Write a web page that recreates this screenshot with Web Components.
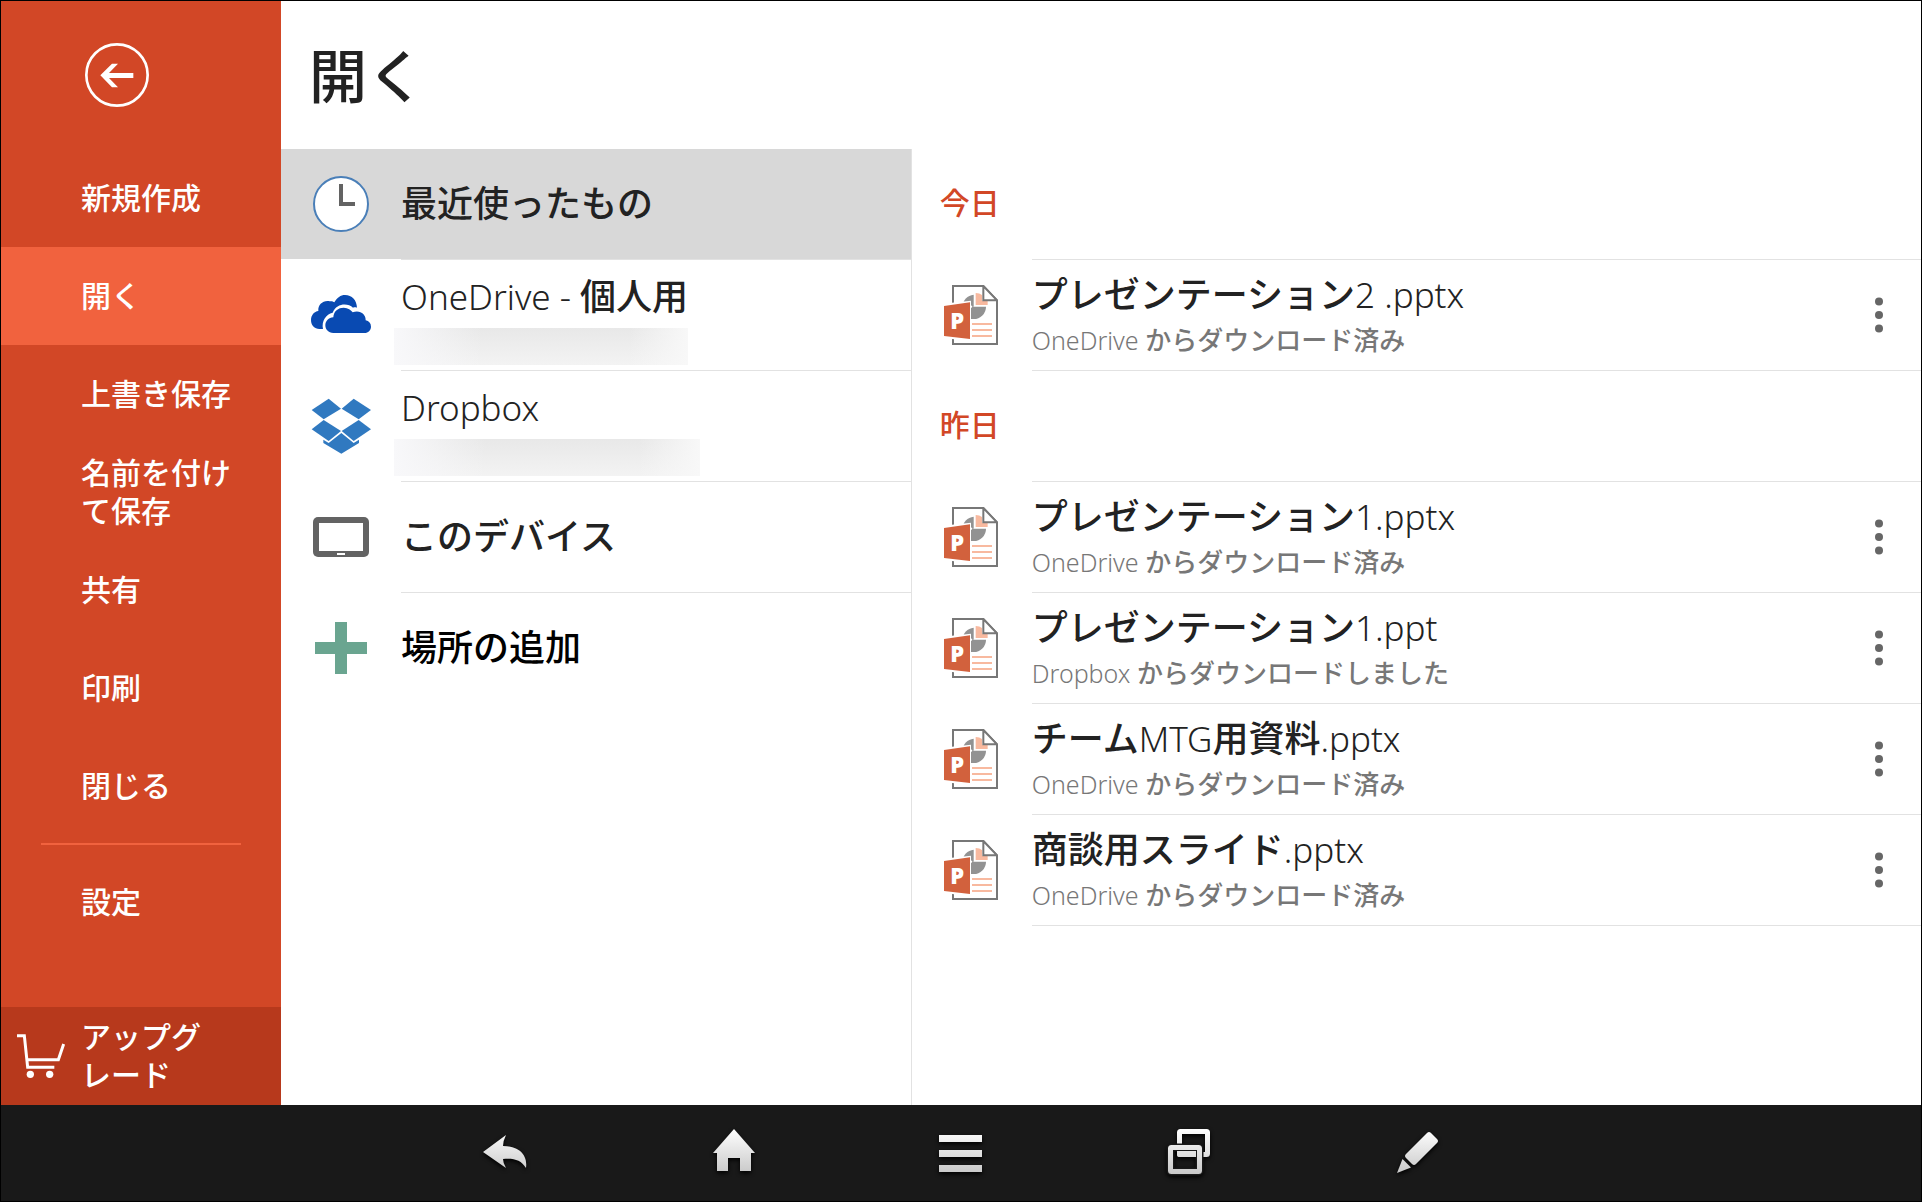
<!DOCTYPE html>
<html lang="ja">
<head>
<meta charset="UTF-8">
<meta name="viewport" content="width=device-width, initial-scale=1.0">
<title>開く</title>
<style>
    * { box-sizing: border-box; }

    body {
        margin: 0;
        font-family: "Noto Sans CJK JP", sans-serif;
        font-weight: 500;
        color: #222;
        --brand: #d24726;
        --brand-light: #f1623e;
        --brand-dark: #b7391c;
        --line: #e2e2e2;
        --latin: "Noto Sans", "Open Sans", sans-serif;
    }
</style>
</head>
<body>
<backstage-app>
    <side-menu slot="menu">
        <side-item>新規作成</side-item>
        <side-item active>開く</side-item>
        <side-item>上書き保存</side-item>
        <side-item>名前を付けて保存</side-item>
        <side-item>共有</side-item>
        <side-item>印刷</side-item>
        <side-item>閉じる</side-item>
        <side-rule></side-rule>
        <side-item>設定</side-item>
        <side-item slot="footer" cart>アップグレード</side-item>
    </side-menu>

    <span slot="title">開く</span>

    <place-row slot="places" icon="clock" label="最近使ったもの" selected></place-row>
    <place-row slot="places" icon="onedrive" label="OneDrive - 個人用" account="294"></place-row>
    <place-row slot="places" icon="dropbox" label="Dropbox" account="306"></place-row>
    <place-row slot="places" icon="tablet" label="このデバイス"></place-row>
    <place-row slot="places" icon="plus" label="場所の追加" last></place-row>

    <file-group slot="files" label="今日">
        <file-row name="プレゼンテーション2 .pptx" status="OneDrive からダウンロード済み"></file-row>
    </file-group>
    <file-group slot="files" label="昨日">
        <file-row name="プレゼンテーション1.pptx" status="OneDrive からダウンロード済み"></file-row>
        <file-row name="プレゼンテーション1.ppt" status="Dropbox からダウンロードしました"></file-row>
        <file-row name="チームMTG用資料.pptx" status="OneDrive からダウンロード済み"></file-row>
        <file-row name="商談用スライド.pptx" status="OneDrive からダウンロード済み"></file-row>
    </file-group>

    <system-bar slot="system"></system-bar>
</backstage-app>

<script>
const RESET = `
    * { box-sizing: border-box; }
    svg { display: block; flex: none; }
    button {
        margin: 0;
        padding: 0;
        border: 0;
        background: none;
        font: inherit;
        color: inherit;
        text-align: left;
        cursor: pointer;
    }
`;

const PLACE_ICONS = {
    clock: `<svg width="60" height="60" viewBox="0 0 60 60">
        <circle cx="30" cy="30" r="27" fill="#fff" stroke="#4a7fb8" stroke-width="2"/>
        <path d="M28 10h4v18h12v4H28z" fill="#636363"/>
    </svg>`,
    onedrive: `<svg width="60" height="60" viewBox="93 435 180 180" fill="#094ab2">
        <path d="M129 567H118C104 567 93 556 93 540C93 525 103 515 115 513C113 494 130 480 149 484C155 483 160 485 163 487C171 473 182 465 195 465C216 465 230 480 231 503C226 501 222 502 219 503C203 488 169 490 158 518C138 522 124 543 129 567Z"/>
        <path d="M160 579C145 579 136 568 136 556C136 543 146 533 160 532C161 513 175 503 191 503C204 503 213 510 218 517C240 509 258 523 257 541C267 543 273 550 273 560C273 571 264 579 254 579Z"/>
    </svg>`,
    dropbox: `<svg width="60" height="60" viewBox="93 78 180 180" fill="#3079c0">
        <path d="M146 86L183 116L131 148L95 120Z"/>
        <path d="M221 86L273 120L236 148L185 116Z"/>
        <path d="M131 150L183 183L146 213L95 178Z"/>
        <path d="M236 150L273 178L221 213L185 183Z"/>
        <path d="M184 189L221 219L237 209V219L184 251L130 219V209L146 219Z"/>
    </svg>`,
    tablet: `<svg width="60" height="60" viewBox="93 411 180 180">
        <rect x="99" y="441" width="168" height="120" rx="15" fill="#636363"/>
        <path d="M117 459H249V543H117ZM171 549H195V555H171Z" fill="#fff"/>
    </svg>`,
    plus: `<svg width="60" height="60" viewBox="0 0 60 60">
        <path d="M24 4h12v20h20v12H36v20H24V36H4V24h20z" fill="#6aa590"/>
    </svg>`
};

const FILE_ICON = `<svg width="54" height="60" viewBox="42 45 162 180">
    <path d="M69 48H160L201 91V222H69Z" fill="#fff" stroke="#777" stroke-width="6"/>
    <path d="M131 110V74A36 36 0 0 0 98 110Z" fill="#929292"/>
    <path d="M131 110H168A37 37 0 0 1 94 110Z" fill="#929292"/>
    <path d="M98 107H126V113H98Z" fill="#fff"/>
    <path d="M137 69Q149 69 156 75V92H173V105H137Z" fill="#f8b99f"/>
    <path d="M160 48V91H201Z" fill="#fff" stroke="#777" stroke-width="6"/>
    <path d="M126 159H186V165H126ZM126 177H186V183H126ZM126 195H186V201H126Z" fill="#f8b99f"/>
    <path d="M66 98L123 92V213L66 207Z" fill="#fff"/>
    <path d="M42 108L120 97V207L42 198Z" fill="#d2613d"/>
    <text x="61" y="177" font-family="Open Sans" font-weight="800" font-size="66" fill="#fff">P</text>
</svg>`;

const CART_ICON = `<svg width="48" height="48" viewBox="51 756 144 144">
    <path d="M51 767H73L83 862H163M80 839H175L191 792" fill="none" stroke="#fff" stroke-width="9"/>
    <circle cx="91" cy="883" r="11" fill="#fff"/>
    <circle cx="149" cy="883" r="11" fill="#fff"/>
</svg>`;

const SYSTEM_ICONS = [
    ['戻る', '<path d="M2 23L25 6Q22 12 22 17C37 17 47 25 45 39C40 31 33 29 22 30Q22 34 25 39Z"/>'],
    ['ホーム', '<path d="M25 0L46 24H42V42H31V29H19V42H8V24H4Z"/>'],
    ['メニュー', '<path d="M2 6H45V13H2ZM2 21H45V28H2ZM2 36H45V43H2Z"/>'],
    ['履歴', `<g fill="none" stroke="url(#shine)" stroke-width="5">
        <rect x="14.5" y="2.5" width="28" height="23" rx="1"/>
        <rect x="5.5" y="18.5" width="29" height="24" rx="1" stroke="#191919" stroke-width="8"/>
        <rect x="5.5" y="18.5" width="29" height="24" rx="1"/>
    </g>
    <path d="M12 22H31V28H14Q12 28 12 26Z"/>`],
    ['ペン', '<path d="M34 4Q36 2 38 4L44 10Q46 12 44 14L23 35Q21 37 19 35L13 29Q11 27 13 25Z"/><path d="M9.500 30L18 38.500L4 44Z"/>']
];

// Wraps runs of Latin letters and digits, which are set lighter than the kana
function mixed(text) {
    return text.replace(/[A-Za-z0-9.][A-Za-z0-9. -]*/g, run => `<span class="latin">${run}</span>`);
}

class BackstageApp extends HTMLElement {
    constructor() {
        super();
        this.attachShadow({ mode: 'open' });
    }

    connectedCallback() {
        this.shadowRoot.innerHTML = `
            <style>
                ${RESET}
                :host {
                    display: flex;
                    flex-direction: column;
                    box-sizing: border-box;
                    min-height: 100vh;
                    border: 1px solid #000;
                    background: #fff;
                }
                .main {
                    flex: 1;
                    display: grid;
                    grid-template-columns: 280px 1fr;
                }
                .content {
                    display: flex;
                    flex-direction: column;
                    min-width: 0;
                }
                h1 {
                    margin: 0;
                    padding: 32px 28px 36px;
                    font-size: 58px;
                    line-height: 80px;
                    font-weight: 500;
                }
                .panes {
                    flex: 1;
                    display: grid;
                    grid-template-columns: 5fr 8fr;
                }
                .places { border-right: 1px solid var(--line); }
            </style>
            <div class="main">
                <slot name="menu"></slot>
                <div class="content">
                    <h1><slot name="title"></slot></h1>
                    <div class="panes">
                        <div class="places"><slot name="places"></slot></div>
                        <div class="files"><slot name="files"></slot></div>
                    </div>
                </div>
            </div>
            <slot name="system"></slot>
        `;
    }
}

class SideMenu extends HTMLElement {
    constructor() {
        super();
        this.attachShadow({ mode: 'open' });
    }

    connectedCallback() {
        this.shadowRoot.innerHTML = `
            <style>
                ${RESET}
                :host {
                    display: flex;
                    flex-direction: column;
                    background: var(--brand);
                    color: #fff;
                }
                .top {
                    display: flex;
                    padding: 42px 84px;
                }
                nav {
                    flex: 1;
                    display: flex;
                    flex-direction: column;
                }
                .footer { background: var(--brand-dark); }
            </style>
            <div class="top">
                <button aria-label="戻る">
                    <svg width="64" height="64" viewBox="255 130 192 192">
                        <circle cx="351" cy="226" r="92" fill="none" stroke="#fff" stroke-width="8"/>
                        <path d="M301 227L336 192H354L327 220H400V235H327L354 263H336Z" fill="#fff"/>
                    </svg>
                </button>
            </div>
            <nav><slot></slot></nav>
            <div class="footer"><slot name="footer"></slot></div>
        `;
    }
}

class SideItem extends HTMLElement {
    constructor() {
        super();
        this.attachShadow({ mode: 'open' });
    }

    connectedCallback() {
        const cart = this.hasAttribute('cart');
        this.shadowRoot.innerHTML = `
            <style>
                ${RESET}
                :host { display: block; }
                :host([active]) { background: var(--brand-light); }
                button {
                    display: flex;
                    align-items: center;
                    gap: 16px;
                    width: 100%;
                    height: 98px;
                    padding: 0 40px 0 ${cart ? 16 : 80}px;
                    font-size: 30px;
                    line-height: 38px;
                    line-break: strict;
                }
                span { padding-bottom: 4px; }
            </style>
            <button>${cart ? CART_ICON : ''}<span><slot></slot></span></button>
        `;
    }
}

class SideRule extends HTMLElement {
    constructor() {
        super();
        this.attachShadow({ mode: 'open' });
    }

    connectedCallback() {
        this.shadowRoot.innerHTML = `
            <style>
                :host { display: block; padding: 8px 40px; }
                hr {
                    margin: 0;
                    border: 0;
                    height: 2px;
                    background: var(--brand-light);
                }
            </style>
            <hr>
        `;
    }
}

class PlaceRow extends HTMLElement {
    constructor() {
        super();
        this.attachShadow({ mode: 'open' });
    }

    connectedCallback() {
        const account = this.getAttribute('account');
        this.shadowRoot.innerHTML = `
            <style>
                ${RESET}
                :host { display: block; }
                button {
                    display: flex;
                    align-items: center;
                    gap: 30px;
                    width: 100%;
                    height: 110px;
                    padding: 0 30px;
                    font-size: 36px;
                    line-height: 48px;
                }
                :host([selected]) button { background: #d8d8d8; }
                :host([last]) { color: #000; }
                .text { padding-bottom: ${account ? 0 : 6}px; }
                .latin {
                    font-family: var(--latin);
                    font-size: 35px;
                    font-weight: 350;
                }
                .account {
                    width: ${account}px;
                    height: 37px;
                    margin: 7px 0 -5px -7px;
                    background: linear-gradient(90deg, #f8f8fa, transparent 30%, transparent 80%, #f8f8f8),
                                linear-gradient(#e8e8e8, #f3f3f3);
                }
                .line {
                    height: 1px;
                    margin-left: 120px;
                    background: var(--line);
                }
                :host([last]) .line { display: none; }
            </style>
            <button>
                ${PLACE_ICONS[this.getAttribute('icon')]}
                <div class="text">
                    <div>${mixed(this.getAttribute('label'))}</div>
                    ${account ? '<div class="account"></div>' : ''}
                </div>
            </button>
            <div class="line"></div>
        `;
    }
}

class FileGroup extends HTMLElement {
    constructor() {
        super();
        this.attachShadow({ mode: 'open' });
    }

    connectedCallback() {
        this.shadowRoot.innerHTML = `
            <style>
                ${RESET}
                :host { display: block; }
                h2 {
                    margin: 0;
                    padding: 0 28px 6px;
                    font-size: 30px;
                    line-height: 104px;
                    font-weight: 500;
                    color: var(--brand);
                }
                .line {
                    height: 1px;
                    margin-left: 120px;
                    background: var(--line);
                }
            </style>
            <h2>${this.getAttribute('label')}</h2>
            <div class="line"></div>
            <slot></slot>
        `;
    }
}

class FileRow extends HTMLElement {
    constructor() {
        super();
        this.attachShadow({ mode: 'open' });
    }

    connectedCallback() {
        this.shadowRoot.innerHTML = `
            <style>
                ${RESET}
                :host { display: block; }
                .row {
                    display: flex;
                    height: 110px;
                }
                .open {
                    flex: 1;
                    display: flex;
                    align-items: center;
                    gap: 34px;
                    padding-left: 32px;
                }
                .name {
                    font-size: 36px;
                    line-height: 46px;
                }
                .status {
                    font-size: 26px;
                    line-height: 42px;
                    color: #777;
                }
                .latin {
                    font-family: var(--latin);
                    font-size: 35px;
                    font-weight: 350;
                }
                .status .latin { font-size: 25px; }
                .more {
                    display: flex;
                    align-items: center;
                    justify-content: center;
                    width: 84px;
                }
                .line {
                    height: 1px;
                    margin-left: 120px;
                    background: var(--line);
                }
            </style>
            <div class="row">
                <button class="open">
                    ${FILE_ICON}
                    <div>
                        <div class="name">${mixed(this.getAttribute('name'))}</div>
                        <div class="status">${mixed(this.getAttribute('status'))}</div>
                    </div>
                </button>
                <button class="more" aria-label="その他">
                    <svg width="8" height="36" viewBox="0 0 8 36" fill="#666">
                        <circle cx="4" cy="4.500" r="4"/>
                        <circle cx="4" cy="18" r="4"/>
                        <circle cx="4" cy="31.500" r="4"/>
                    </svg>
                </button>
            </div>
            <div class="line"></div>
        `;
    }
}

class SystemBar extends HTMLElement {
    constructor() {
        super();
        this.attachShadow({ mode: 'open' });
    }

    connectedCallback() {
        const buttons = SYSTEM_ICONS.map(([label, shape]) => `
            <button aria-label="${label}">
                <svg width="48" height="48" viewBox="0 0 48 48" fill="url(#shine)">
                    <defs>
                        <linearGradient id="shine" gradientUnits="userSpaceOnUse" x1="0" y1="0" x2="0" y2="48">
                            <stop offset="0" stop-color="#fff"/>
                            <stop offset="1" stop-color="#c4c4c4"/>
                        </linearGradient>
                    </defs>
                    ${shape}
                </svg>
            </button>
        `).join('');
        this.shadowRoot.innerHTML = `
            <style>
                ${RESET}
                :host {
                    display: flex;
                    justify-content: center;
                    height: 96px;
                    background: #191919;
                }
                button {
                    display: flex;
                    align-items: center;
                    justify-content: center;
                    width: 228px;
                }
                svg { filter: drop-shadow(0 2px 2px #000); }
            </style>
            ${buttons}
        `;
    }
}

customElements.define('backstage-app', BackstageApp);
customElements.define('side-menu', SideMenu);
customElements.define('side-item', SideItem);
customElements.define('side-rule', SideRule);
customElements.define('place-row', PlaceRow);
customElements.define('file-group', FileGroup);
customElements.define('file-row', FileRow);
customElements.define('system-bar', SystemBar);
</script>
</body>
</html>
